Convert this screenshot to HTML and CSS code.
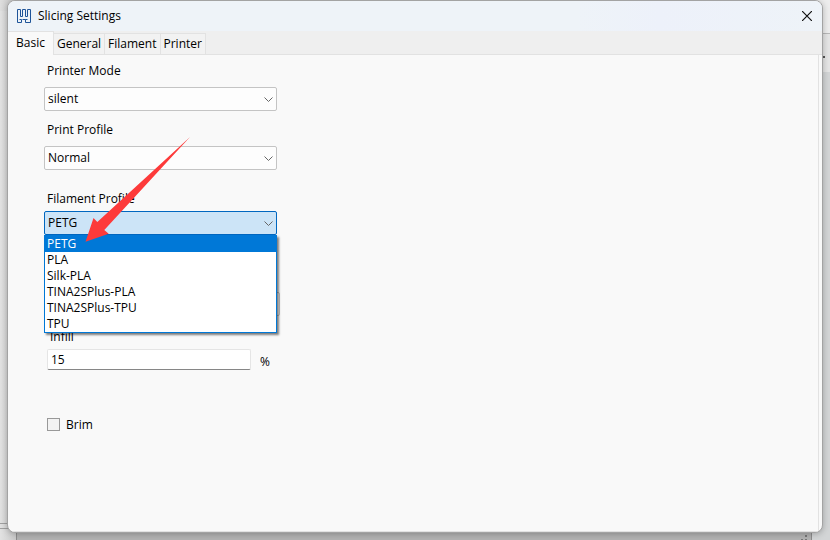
FILE: index.html
```html
<!DOCTYPE html>
<html lang="en">
<head>
<meta charset="utf-8">
<title>Slicing Settings</title>
<link rel="stylesheet" href="styles.css">
</head>
<body>
<div class="backdrop" aria-hidden="true">
  <div class="edge-top"><i class="accent"></i><i class="accent wide"></i></div>
  <div class="edge-left"></div>
  <div class="edge-right"><span class="more"></span></div>
  <div class="edge-bottom"><svg class="grip" width="8" height="8" viewBox="0 0 8 8"><path d="M4 0h2v2H4zM0 4h2v2H0zM4 4h2v2H4z" fill="#777"/></svg></div>
</div>
<main class="dialog">
  <header class="titlebar">
    <svg class="logo" width="14" height="14" viewBox="0 0 14 14" fill="none" stroke="#1f5499"><path d="M.5.5h3v7h2v-7h3v7h2v-7h3v13h-5v-3h2M.5.5v13h4v-3h-2M5.500 10.500h3"/></svg>
    <h1>Slicing Settings</h1>
    <button class="close" aria-label="Close"><svg width="10" height="10" viewBox="0 0 10 10"><path d="M0 0l10 10M10 0L0 10" stroke="#111" stroke-width="1.200"/></svg></button>
  </header>
  <nav class="tabs" role="tablist">
    <button class="tab active" role="tab" aria-selected="true">Basic</button>
    <button class="tab" role="tab">General</button>
    <button class="tab" role="tab">Filament</button>
    <button class="tab" role="tab">Printer</button>
  </nav>
  <form class="panel">
    <div class="field">
      <label for="mode">Printer Mode</label>
      <select id="mode"><option>silent</option></select>
    </div>
    <div class="field">
      <label for="profile">Print Profile</label>
      <select id="profile"><option>Normal</option></select>
    </div>
    <div class="field filament">
      <label for="filament">Filament Profile</label>
      <select id="filament" class="open"><option>PETG</option><option>PLA</option><option>Silk-PLA</option><option>TINA2SPlus-PLA</option><option>TINA2SPlus-TPU</option><option>TPU</option></select>
      <ul class="menu" role="listbox" aria-label="Filament Profile">
        <li class="selected" role="option" aria-selected="true">PETG</li>
        <li role="option">PLA</li>
        <li role="option">Silk-PLA</li>
        <li role="option">TINA2SPlus-PLA</li>
        <li role="option">TINA2SPlus-TPU</li>
        <li role="option">TPU</li>
      </ul>
      <svg class="arrow" width="106" height="106" viewBox="0 0 106 106" aria-hidden="true"><path d="M105 0L19.300 93l4.400 3.700L.5 104.700l8-23.700 3.800 4z" fill="#fd3a3a"/></svg>
    </div>
    <div class="field extra">
      <select aria-label="Quality"><option></option></select>
    </div>
    <div class="field infill">
      <label for="infill">Infill</label>
      <div class="unit-row"><input id="infill" type="text" value="15"><span>%</span></div>
    </div>
    <div class="check"><input id="brim" type="checkbox"><label for="brim">Brim</label></div>
  </form>
</main>
</body>
</html>
```
FILE: styles.css
```css
* { box-sizing: border-box; }

body {
  margin: 0;
  min-height: 100vh;
  display: flex;
  font: 12px/16px "Open Sans", "Noto Sans", sans-serif;
  color: #000;
  background: #d9d9d9;
}

button, input, select { font: inherit; color: inherit; margin: 0; }

/* Window behind the dialog */
.backdrop > * { position: absolute; }
.edge-top {
  top: 0; left: 0; right: 0; height: 12px;
  padding-left: 225px;
  display: flex; gap: 2px;
  background: #b2b2b4;
}
.accent { width: 4px; height: 1px; background: #344b9b; }
.wide { width: 6px; }
.edge-left {
  top: 0; bottom: 0; left: 0; width: 16px;
  background: linear-gradient(90deg, #e2e2e2, #c9c9c9);
}
.edge-left::before {
  content: ""; display: block; height: 11px;
  background: linear-gradient(90deg, #dedede, #c4c4c4);
}
.edge-left::after {
  content: ""; position: absolute; bottom: 11px; left: 0; right: 0;
  height: 4px; border: solid #a0a0a0; border-width: 1px 0;
}
.edge-right {
  top: 0; bottom: 0; right: 0; width: 18px;
  background: linear-gradient(#ededed 33px, #b8b8b8 33px 34px, #e5e5e5 34px 72px, #d3d5d6 72px);
}
.more { position: absolute; top: 56px; right: 5px; width: 2px; height: 2px; background: #555; }
.edge-bottom {
  bottom: 0; left: 16px; right: 18px; height: 18px;
  border: solid #8c8c8c; border-width: 0 1px;
  background: #b2b2b2;
}
.grip { position: absolute; right: 2px; bottom: -3px; }

.dialog {
  position: relative;
  flex: 1;
  display: flex;
  flex-direction: column;
  margin: 0 7px 7px;
  overflow: hidden;
  border: 1px solid #a3a3a3;
  border-radius: 8px;
  background: #f9f9f9;
  box-shadow: 0 1px 6px rgba(0, 0, 0, .25);
}

.titlebar {
  display: flex;
  align-items: center;
  height: 30px;
  padding: 0 10px 0 9px;
  background: linear-gradient(90deg, #eef3f8 70%, #edf1fa 80%, #eef3f8);
}
h1 { flex: 1; margin: 0 0 0 7px; font-size: 12px; font-weight: 400; }
.close { display: flex; padding: 0; border: 0; background: none; }

.tabs {
  display: flex;
  align-items: flex-end;
  height: 24px;
  background: #efefef;
  box-shadow: inset 0 -1px #e2e2e2;
}
.tab {
  height: 22px;
  padding: 0 3px;
  border: solid #e2e2e2;
  border-width: 1px 1px 1px 0;
  background: #f2f2f2;
}
.tab.active { height: 24px; padding: 0 8px 2px; border-bottom: 0; background: #f9f9f9; }

.panel {
  flex: 1;
  margin-right: 3px;
  padding: 8px 36px;
  border: solid #e2e2e2;
  border-width: 0 1px 1px 0;
}
.field { position: relative; display: flex; flex-direction: column; gap: 8px; width: 233px; margin-bottom: 11px; }
.field > label { padding-left: 3px; }
select {
  appearance: none;
  width: 100%;
  height: 24px;
  padding: 0 20px 0 3px;
  border: 1px solid #c4c4c4;
  border-radius: 2px;
  background: #fdfdfd url("data:image/svg+xml,%3Csvg xmlns='http://www.w3.org/2000/svg' width='9' height='6'%3E%3Cpath d='M.5.5l4 4 4-4' fill='none' stroke='%23666'/%3E%3C/svg%3E") no-repeat right 3px top 9px;
}
select.open { border-color: #0067c0; background-color: #cce4f7; }

.filament { gap: 4px; margin: 21px 0 57px; }
.menu {
  position: absolute;
  z-index: 1;
  top: 100%;
  left: 0;
  right: 0;
  margin: 0;
  padding: 0;
  list-style: none;
  border: 1px solid #0078d7;
  background: #fff;
  box-shadow: 2px 2px 2px rgba(0, 0, 0, .5);
}
.menu li { padding-left: 2px; }
.menu .selected { color: #fff; background: #0078d7; }
.arrow { position: absolute; z-index: 2; top: -54px; left: 41px; }

.extra { padding-left: 3px; width: 236px; margin-bottom: 13px; }
.infill { gap: 4px; padding-left: 3px; margin-bottom: 48px; }
.unit-row { display: flex; gap: 9px; align-items: flex-end; }
.unit-row input {
  width: 204px;
  height: 21px;
  padding: 0 3px;
  border: 1px solid #e5e5e5;
  border-bottom-color: #868686;
  border-radius: 2px;
  background: #fff;
}
.check { display: flex; align-items: center; gap: 6px; padding-left: 3px; line-height: 13px; }
.check input { appearance: none; width: 13px; height: 13px; border: 1px solid #999; background: #f3f3f3; }
```
